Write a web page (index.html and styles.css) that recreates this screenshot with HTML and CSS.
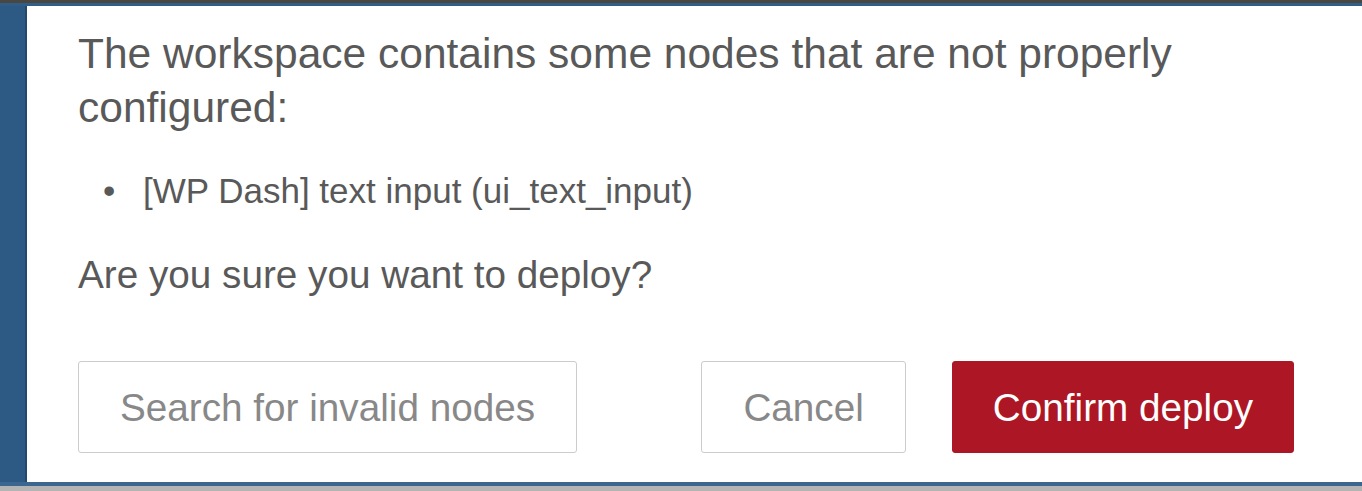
FILE: index.html
```html
<!DOCTYPE html>
<html lang="en">
<head>
  <meta charset="UTF-8">
  <title>Confirm deploy</title>
  <link rel="stylesheet" href="styles.css">
</head>
<body>

  <div class="frame">
    <div class="top-edge"></div>
    <div class="top-line"></div>

    <div class="middle">
      <div class="side"></div>

      <div class="dialog">
        <p class="lead">The workspace contains some nodes that are not properly configured:</p>
        <ul class="invalid-list">
          <li>[WP Dash] text input (ui_text_input)</li>
        </ul>
        <p class="question">Are you sure you want to deploy?</p>

        <div class="buttons">
          <button class="btn btn-search">Search for invalid nodes</button>
          <button class="btn">Cancel</button>
          <button class="btn btn-primary">Confirm deploy</button>
        </div>
      </div>
    </div>

    <div class="bottom-line"></div>
    <div class="bottom-edge"></div>
  </div>

</body>
</html>
```

FILE: styles.css
```css
/* Page frame */
body {
  margin: 0;
  font-family: 'Liberation Sans', Arial, sans-serif;
  overflow: hidden;
}

.frame {
  height: 491px;
  display: flex;
  flex-direction: column;
  background: #2d5a84;
}

.top-edge {
  height: 3px;
  background: #4a4740;
}

.top-line {
  height: 3px;
  background: #2f5e8b;
}

.middle {
  flex: 1;
  display: flex;
}

.side {
  width: 27px;
  background: #2d5a84;
  box-shadow: inset -2px 0 0 #24496c;
}

.bottom-line {
  height: 4px;
  background: #3a6690;
}

.bottom-edge {
  height: 5px;
  background: #b4b4b4;
}

/* Dialog body */
.dialog {
  flex: 1;
  background: #fff;
  padding: 21px 68px 0 51px;
  color: #595959;
}

.lead {
  margin: 0;
  font-size: 42.5px;
  line-height: 54px;
}

.invalid-list {
  margin: 36px 0 0;
  padding-left: 25px;
  list-style: none;
  font-size: 35px;
  line-height: 40px;
}

.invalid-list li::before {
  content: "\2022";
  display: inline-block;
  width: 40px;
}

.question {
  margin: 42px 0 0;
  font-size: 38.7px;
  line-height: 44px;
}

/* Buttons */
.buttons {
  display: flex;
  gap: 46px;
  margin-top: 64px;
}

.btn {
  font-family: inherit;
  font-size: 38.7px;
  line-height: 44px;
  padding: 24px 41px 22px;
  border: 1px solid #ccc;
  border-radius: 3px;
  background: #fff;
  color: #888;
}

.btn-search {
  margin-right: auto;
}

.btn-primary {
  padding: 24px 40px 22px;
  background: #ad1625;
  border-color: #ad1625;
  color: #fff;
}
```
